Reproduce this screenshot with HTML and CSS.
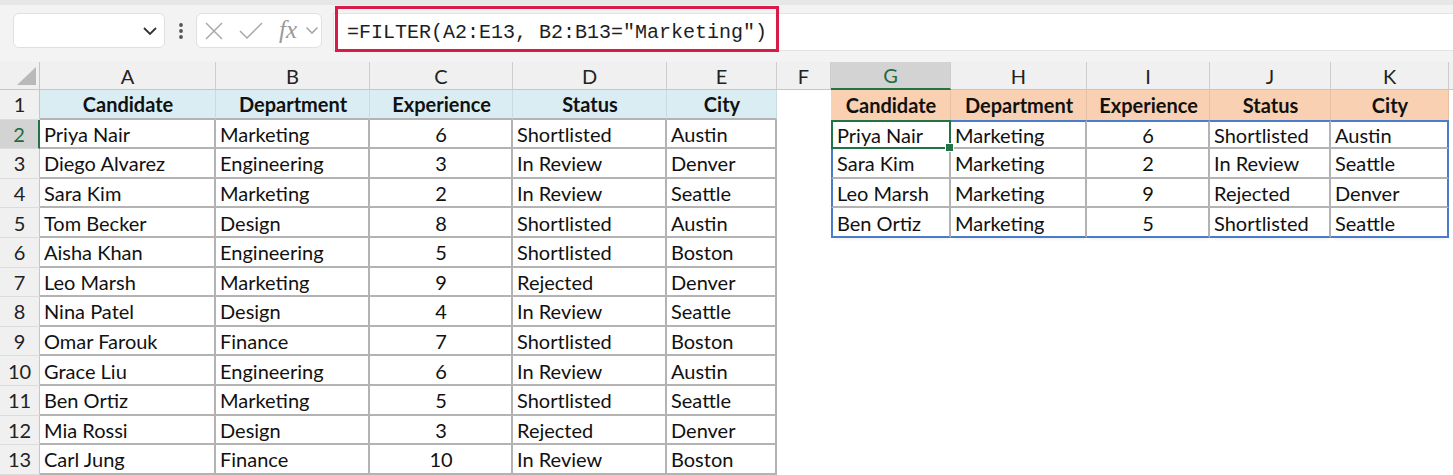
FILE: index.html
```html
<!DOCTYPE html>
<html>
<head>
<meta charset="utf-8">
<link rel="stylesheet" href="styles.css">
</head>
<body>
<div class="top">
  <div class="fbar">
    <div class="namebox">
      <svg width="16" height="10" viewBox="0 0 16 10"><polyline points="2,2 8,8 14,2" fill="none" stroke="#333" stroke-width="1.8"/></svg>
    </div>
    <div class="dots">
      <svg width="6" height="18" viewBox="0 0 6 18"><circle cx="3" cy="3" r="1.9" fill="#555"/><circle cx="3" cy="9" r="1.9" fill="#555"/><circle cx="3" cy="15" r="1.9" fill="#555"/></svg>
    </div>
    <div class="fxbox">
      <svg class="ic-x" width="20" height="20" viewBox="0 0 20 20"><path d="M2 2 L18 18 M18 2 L2 18" stroke="#a8a8a8" stroke-width="1.5" fill="none"/></svg>
      <svg class="ic-ok" width="26" height="20" viewBox="0 0 26 20"><polyline points="2,10 9,17 24,2" stroke="#a8a8a8" stroke-width="1.5" fill="none"/></svg>
      <span class="fx">fx</span>
      <svg class="ic-dd" width="14" height="9" viewBox="0 0 14 9"><polyline points="1.5,1.5 7,7 12.5,1.5" fill="none" stroke="#a8a8a8" stroke-width="1.6"/></svg>
    </div>
    <div class="formula">
      <div class="redbox">=FILTER(A2:E13, B2:B13="Marketing")</div>
    </div>
  </div>
</div>

<div class="sheet">
  <div class="row colhdr">
    <div class="ch corner"><svg width="22" height="20" viewBox="0 0 22 20"><polygon points="21,1 21,19 2,19" fill="#b9b9b9"/></svg></div>
    <div class="ch">A</div><div class="ch">B</div><div class="ch">C</div><div class="ch">D</div><div class="ch">E</div><div class="ch">F</div><div class="ch sel">G</div><div class="ch">H</div><div class="ch">I</div><div class="ch">J</div><div class="ch">K</div><div class="ch last"></div>
  </div>

  <div class="row">
    <div class="rh">1</div>
    <div class="c h1">Candidate</div><div class="c h1">Department</div><div class="c h1">Experience</div><div class="c h1">Status</div><div class="c h1">City</div>
    <div class="c"></div>
    <div class="c h2">Candidate</div><div class="c h2">Department</div><div class="c h2">Experience</div><div class="c h2">Status</div><div class="c h2">City</div>
  </div>

  <div class="row">
    <div class="rh rsel">2</div>
    <div class="c t1">Priya Nair</div><div class="c t1">Marketing</div><div class="c t1 num">6</div><div class="c t1">Shortlisted</div><div class="c t1">Austin</div>
    <div class="c"></div>
    <div class="c t2 bl bt active">Priya Nair<span class="selbox"><span class="handle"></span></span></div><div class="c t2 bt">Marketing</div><div class="c t2 bt num">6</div><div class="c t2 bt">Shortlisted</div><div class="c t2 bt br">Austin</div>
  </div>

  <div class="row">
    <div class="rh">3</div>
    <div class="c t1">Diego Alvarez</div><div class="c t1">Engineering</div><div class="c t1 num">3</div><div class="c t1">In Review</div><div class="c t1">Denver</div>
    <div class="c"></div>
    <div class="c t2 bl">Sara Kim</div><div class="c t2">Marketing</div><div class="c t2 num">2</div><div class="c t2">In Review</div><div class="c t2 br">Seattle</div>
  </div>

  <div class="row">
    <div class="rh">4</div>
    <div class="c t1">Sara Kim</div><div class="c t1">Marketing</div><div class="c t1 num">2</div><div class="c t1">In Review</div><div class="c t1">Seattle</div>
    <div class="c"></div>
    <div class="c t2 bl">Leo Marsh</div><div class="c t2">Marketing</div><div class="c t2 num">9</div><div class="c t2">Rejected</div><div class="c t2 br">Denver</div>
  </div>

  <div class="row">
    <div class="rh">5</div>
    <div class="c t1">Tom Becker</div><div class="c t1">Design</div><div class="c t1 num">8</div><div class="c t1">Shortlisted</div><div class="c t1">Austin</div>
    <div class="c"></div>
    <div class="c t2 bl bb">Ben Ortiz</div><div class="c t2 bb">Marketing</div><div class="c t2 bb num">5</div><div class="c t2 bb">Shortlisted</div><div class="c t2 bb br">Seattle</div>
  </div>

  <div class="row">
    <div class="rh">6</div>
    <div class="c t1">Aisha Khan</div><div class="c t1">Engineering</div><div class="c t1 num">5</div><div class="c t1">Shortlisted</div><div class="c t1">Boston</div>
  </div>

  <div class="row">
    <div class="rh">7</div>
    <div class="c t1">Leo Marsh</div><div class="c t1">Marketing</div><div class="c t1 num">9</div><div class="c t1">Rejected</div><div class="c t1">Denver</div>
  </div>

  <div class="row">
    <div class="rh">8</div>
    <div class="c t1">Nina Patel</div><div class="c t1">Design</div><div class="c t1 num">4</div><div class="c t1">In Review</div><div class="c t1">Seattle</div>
  </div>

  <div class="row">
    <div class="rh">9</div>
    <div class="c t1">Omar Farouk</div><div class="c t1">Finance</div><div class="c t1 num">7</div><div class="c t1">Shortlisted</div><div class="c t1">Boston</div>
  </div>

  <div class="row">
    <div class="rh">10</div>
    <div class="c t1">Grace Liu</div><div class="c t1">Engineering</div><div class="c t1 num">6</div><div class="c t1">In Review</div><div class="c t1">Austin</div>
  </div>

  <div class="row">
    <div class="rh">11</div>
    <div class="c t1">Ben Ortiz</div><div class="c t1">Marketing</div><div class="c t1 num">5</div><div class="c t1">Shortlisted</div><div class="c t1">Seattle</div>
  </div>

  <div class="row">
    <div class="rh">12</div>
    <div class="c t1">Mia Rossi</div><div class="c t1">Design</div><div class="c t1 num">3</div><div class="c t1">Rejected</div><div class="c t1">Denver</div>
  </div>

  <div class="row">
    <div class="rh">13</div>
    <div class="c t1">Carl Jung</div><div class="c t1">Finance</div><div class="c t1 num">10</div><div class="c t1">In Review</div><div class="c t1">Boston</div>
  </div>
</div>
</body>
</html>
```

FILE: styles.css
```css
html, body {
  margin: 0;
  padding: 0;
  background: #ffffff;
}
body {
  width: 1453px;
  height: 475px;
  overflow: hidden;
  font-family: Lato, "Open Sans", sans-serif;
  color: #111;
}

/* ---------- formula bar ---------- */
.top {
  height: 62px;
  box-sizing: border-box;
  background: #f3f3f3;
  border-top: 5px solid #e7e7e7;
}
.fbar {
  display: flex;
  align-items: flex-start;
  padding-top: 8px;
  padding-left: 13px;
}
.namebox {
  width: 152px;
  height: 35px;
  box-sizing: border-box;
  background: #fff;
  border: 1px solid #e0e0e0;
  border-radius: 6px;
  display: flex;
  align-items: center;
  justify-content: flex-end;
  padding-right: 6px;
}
.dots {
  width: 31px;
  height: 35px;
  display: flex;
  align-items: center;
  justify-content: center;
}
.fxbox {
  width: 126px;
  height: 35px;
  box-sizing: border-box;
  background: #fff;
  border: 1px solid #e0e0e0;
  border-radius: 6px;
  display: flex;
  align-items: center;
  padding-left: 7px;
}
.ic-x { margin-right: 14px; }
.ic-ok { margin-right: 15px; }
.fx {
  font-family: "Liberation Serif", serif;
  font-style: italic;
  font-size: 25px;
  color: #9a9a9a;
  line-height: 1;
  margin-top: -3px;
  margin-right: 8px;
}
.formula {
  flex: 1;
  height: 38px;
  box-sizing: border-box;
  margin-left: 11px;
  background: #fff;
  border: 1px solid #e3e3e3;
  border-right: none;
  display: flex;
  align-items: flex-start;
}
.redbox {
  margin-left: 1px;
  margin-top: -8px;
  width: 444px;
  height: 46px;
  box-sizing: border-box;
  border: 3px solid #d81b48;
  padding-left: 9px;
  padding-top: 6px;
  display: flex;
  align-items: center;
  font-family: "Liberation Mono", "DejaVu Sans Mono", monospace;
  font-size: 20px;
  color: #1e1e1e;
  white-space: pre;
}

/* ---------- sheet ---------- */
.sheet {
  font-size: 20px;
}
.row {
  display: grid;
  grid-template-columns: 40px 176px 154px 143px 154px 110px 54px 120px 136px 123px 121px 118px 1fr;
  height: 29.6px;
}
.row.colhdr {
  height: 28px;
  background: #f0f0f0;
}
.ch {
  box-sizing: border-box;
  display: flex;
  align-items: center;
  justify-content: center;
  color: #222;
  border-right: 1px solid #cdcdcd;
  border-bottom: 1px solid #c6c6c6;
}
.ch.corner {
  justify-content: flex-end;
  align-items: flex-end;
  padding: 0 2px 3px 0;
  border-right: 1px solid #c6c6c6;
}
.ch.sel {
  background: #d3d3d3;
  color: #1d6b3f;
  border-bottom: 2px solid #217346;
}
.ch.last { border-right: none; }

.rh {
  box-sizing: border-box;
  display: flex;
  align-items: center;
  justify-content: center;
  background: #f0f0f0;
  color: #222;
  border-right: 1px solid #c6c6c6;
  border-bottom: 1px solid #dcdcdc;
}
.rh.rsel {
  background: #d3d3d3;
  color: #1d6b3f;
  border-right: 2px solid #217346;
}

.c {
  box-sizing: border-box;
  display: flex;
  align-items: center;
  padding: 1px 3px 0 4px;
  white-space: nowrap;
  overflow: hidden;
  min-width: 0;
}
.h1, .h2 {
  font-weight: bold;
  justify-content: center;
}
.h1 {
  background: #daedf3;
  border-right: 1px solid #c8dbe2;
  border-bottom: 2px solid #b3b3b3;
}
.h2 {
  background: #f9d1b2;
  border-right: 1px solid #e6c0a3;
}
.t1, .t2 {
  border-right: 2px solid #b3b3b3;
  border-bottom: 2px solid #b3b3b3;
}
.num { justify-content: center; }

.bl { border-left: 2px solid #4a7ccc; }
.br { border-right: 2px solid #4a7ccc; }
.bt { border-top: 2px solid #4a7ccc; }
.bb {
  border-bottom: 2px solid #4a7ccc;
  box-shadow: 0 3px 3px -2px rgba(0, 0, 0, 0.08);
}

.c.active {
  position: relative;
  overflow: visible;
}
.selbox {
  position: absolute;
  left: -2px;
  top: -2px;
  right: -2px;
  bottom: -2px;
  border: 2px solid #217346;
}
.handle {
  position: absolute;
  right: -5px;
  bottom: -5px;
  width: 7px;
  height: 7px;
  background: #217346;
  border: 1px solid #fff;
}
```
